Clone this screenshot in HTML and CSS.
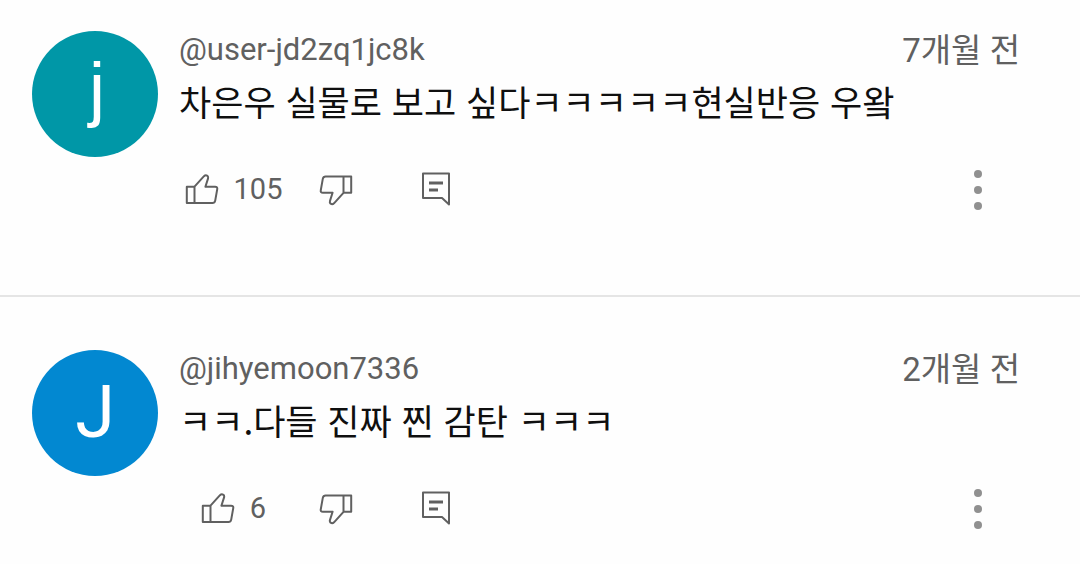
FILE: index.html
```
<!DOCTYPE html>
<html lang="ko">
<head>
<meta charset="utf-8">
<meta name="viewport" content="width=device-width, initial-scale=1">
<title>댓글</title>
<link rel="stylesheet" href="styles.css">
</head>
<body>
<svg class="sprite" aria-hidden="true">
  <symbol id="thumb" viewBox="0 0 36 36">
    <path d="M10.5 15.7H2.8V32H10.5ZM10.5 15.7L20 5.2Q21.6 3.6 23.4 4.8Q24.6 5.8 24 7.6L21.4 15.7H31Q33.8 15.7 33.2 18.4L31.2 29.6Q30.7 32 28.4 32H10.5"/>
  </symbol>
  <symbol id="thumb-down" viewBox="0 0 36 36">
    <path transform="rotate(180 18 18.75)" d="M10.5 15.7H2.8V32H10.5ZM10.5 15.7L20 5.2Q21.6 3.6 23.4 4.8Q24.6 5.8 24 7.6L21.4 15.7H31Q33.8 15.7 33.2 18.4L31.2 29.6Q30.7 32 28.4 32H10.5"/>
  </symbol>
  <symbol id="reply" viewBox="0 0 36 36">
    <path d="M5 2.5H31V33.5L24 27H5Z"/>
    <path class="bar" d="M11 12H25M11 19H20"/>
  </symbol>
  <symbol id="more" viewBox="0 0 12 44">
    <circle cx="6" cy="7" r="4"/><circle cx="6" cy="23" r="4"/><circle cx="6" cy="39" r="4"/>
  </symbol>
</svg>
<main>
  <article class="comment comment--first">
    <div class="avatar avatar--teal" aria-hidden="true">j</div>
    <div class="content">
      <header class="meta">
        <a class="author" href="#">@user-jd2zq1jc8k</a>
        <time class="date">7개월 전</time>
      </header>
      <p class="text">차은우 실물로 보고 싶다ㅋㅋㅋㅋㅋ현실반응 우왘</p>
      <div class="actions">
        <button class="like" type="button" aria-label="좋아요 105"><svg class="icon"><use href="#thumb"/></svg><span>105</span></button>
        <button type="button" aria-label="싫어요"><svg class="icon"><use href="#thumb-down"/></svg></button>
        <button class="reply" type="button" aria-label="답글"><svg class="icon"><use href="#reply"/></svg></button>
        <button class="more" type="button" aria-label="더보기"><svg class="dots"><use href="#more"/></svg></button>
      </div>
    </div>
  </article>
  <article class="comment">
    <div class="avatar avatar--blue" aria-hidden="true">J</div>
    <div class="content">
      <header class="meta">
        <a class="author" href="#">@jihyemoon7336</a>
        <time class="date">2개월 전</time>
      </header>
      <p class="text">ㅋㅋ.다들 진짜 찐 감탄 ㅋㅋㅋ</p>
      <div class="actions">
        <button class="like" type="button" aria-label="좋아요 6"><svg class="icon"><use href="#thumb"/></svg><span>6</span></button>
        <button type="button" aria-label="싫어요"><svg class="icon"><use href="#thumb-down"/></svg></button>
        <button class="reply" type="button" aria-label="답글"><svg class="icon"><use href="#reply"/></svg></button>
        <button class="more" type="button" aria-label="더보기"><svg class="dots"><use href="#more"/></svg></button>
      </div>
    </div>
  </article>
</main>
</body>
</html>
```
FILE: styles.css
```
* { box-sizing: border-box; }

body {
  margin: 0;
  background: #fefefe;
  color: #0f0f0f;
  font-family: Roboto, "Noto Sans CJK KR", sans-serif;
}

.sprite { display: none; }

.comment {
  display: flex;
  gap: 21px;
  padding: 53px 60px 28px 32px;
}

.comment--first {
  padding-top: 31px;
  padding-bottom: 81px;
  border-bottom: 2px solid #e5e5e5;
}

.avatar {
  display: flex;
  flex: none;
  align-items: center;
  justify-content: center;
  width: 126px;
  height: 126px;
  border-radius: 50%;
  color: #fff;
  font-size: 72px;
  line-height: 84px;
}

.avatar--teal {
  padding: 0 0 12px 4px;
  background: #0097a7;
  font-family: "Liberation Sans", sans-serif;
}

.avatar--blue { background: #0288d1; }

.content { flex: 1; min-width: 0; }

.meta {
  display: flex;
  align-items: flex-start;
  justify-content: space-between;
  height: 40px;
  color: #606060;
}

.author {
  color: inherit;
  font-size: 31px;
  line-height: 38px;
  text-decoration: none;
}

.date {
  font-size: 33px;
  line-height: 40px;
}

.text {
  margin: 4px 0 0;
  font-family: "Noto Sans CJK KR", sans-serif;
  font-size: 35px;
  line-height: 52px;
}

.actions {
  display: flex;
  align-items: center;
  height: 50px;
  margin-top: 37px;
}

button {
  display: flex;
  align-items: center;
  justify-content: center;
  padding: 0;
  border: 0;
  background: none;
  color: #606060;
  font: 29px/36px Roboto, sans-serif;
}

.like {
  width: 108px;
  gap: 14px;
  margin-right: 31px;
}

.reply { margin-left: 64px; }

.more { margin: 0 36px 0 auto; }

.icon {
  width: 36px;
  height: 36px;
  fill: none;
  stroke: #606060;
  stroke-width: 2;
  stroke-linejoin: round;
}

.bar { stroke-width: 3; }

.dots {
  width: 12px;
  height: 44px;
  fill: #909090;
}
```
